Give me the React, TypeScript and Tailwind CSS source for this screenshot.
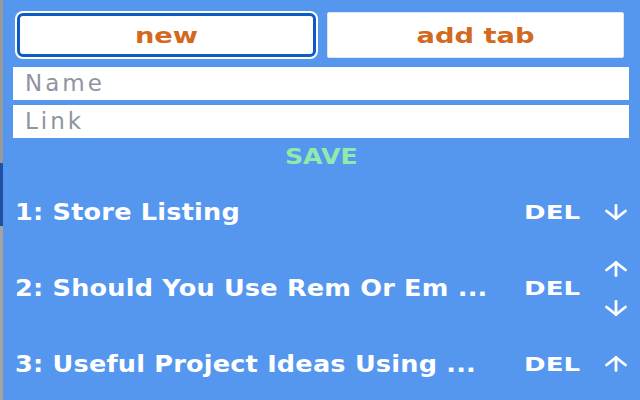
import React from 'react';

type Tab = { title: string; up: boolean; down: boolean };

const tabs: Tab[] = [
  { title: '1: Store Listing', up: false, down: true },
  { title: '2: Should You Use Rem Or Em ...', up: true, down: true },
  { title: '3: Useful Project Ideas Using ...', up: true, down: false },
];

const font = { fontFamily: '"DejaVu Sans", Verdana, sans-serif' };

function Arrow({ dir }: { dir: 'up' | 'down' }) {
  return (
    <svg width="26" height="16" viewBox="0 0 26 16" fill="none" stroke="white" strokeWidth="2.8" strokeLinecap="round" strokeLinejoin="round">
      {dir === 'down' ? (
        <>
          <path d="M13 1.5v13" />
          <path d="M3.5 7l9.5 7.5 9.5-7.5" />
        </>
      ) : (
        <>
          <path d="M13 14.5v-13" />
          <path d="M3.5 9l9.5-7.5 9.5 7.5" />
        </>
      )}
    </svg>
  );
}

function TabRow({ tab }: { tab: Tab }) {
  return (
    <div className="h-[76px] flex items-center">
      <div className="flex-1 pl-[2px] text-white font-bold text-[23px] whitespace-nowrap">
        <span className="inline-block origin-left scale-x-[1.11] tracking-[0.2px]">{tab.title}</span>
      </div>
      <button className="text-white font-bold text-[20px] mr-[23px]">
        <span className="inline-block origin-right scale-x-[1.3]">DEL</span>
      </button>
      <div className="w-[26px] flex flex-col gap-[23px]">
        {tab.up && <Arrow dir="up" />}
        {tab.down && <Arrow dir="down" />}
      </div>
    </div>
  );
}

export default function App() {
  return (
    <div className="w-[640px] h-[400px] overflow-hidden flex flex-col bg-[#5597ef]" style={font}>
      <div className="h-[2px] bg-[#34373d]" />
      <div className="flex flex-1">
        <div className="w-[3px] flex flex-col">
          <div className="h-[163px] bg-[#9a9a9a]" />
          <div className="h-[63px] bg-[#1f50a3]" />
          <div className="flex-1 bg-[#a5a39d]" />
        </div>
        <div className="flex-1 pl-[10px] pr-[11px] pt-[12px]">
          <div className="h-[46px] flex items-center">
            <button className="ml-[4px] w-[299px] h-[44px] bg-white rounded-[6px] border-[3px] border-[#0d5cc6] ring-2 ring-white text-[#d2691e] font-bold text-[22px]">
              <span className="inline-block scale-x-[1.24]">new</span>
            </button>
            <button className="ml-[11px] w-[297px] h-[46px] bg-white rounded-[2px] border border-[#dfe6f0] text-[#d2691e] font-bold text-[22px]">
              <span className="inline-block scale-x-[1.24]">add tab</span>
            </button>
          </div>
          <input
            placeholder="Name"
            className="mt-[9px] block w-full h-[33px] bg-white px-[12px] text-[23px] tracking-[3px] outline-none placeholder:text-[#8e95a2]"
          />
          <input
            placeholder="Link"
            className="mt-[5px] block w-full h-[33px] bg-white px-[12px] text-[23px] tracking-[3px] outline-none placeholder:text-[#8e95a2]"
          />
          <div className="mt-[6px] h-[26px] leading-[26px] text-center text-[#90e9ad] font-bold text-[21px]">
            <span className="inline-block scale-x-[1.2]">SAVE</span>
          </div>
          <div className="mt-[4px]">
            {tabs.map((t) => (
              <TabRow key={t.title} tab={t} />
            ))}
          </div>
        </div>
      </div>
    </div>
  );
}
